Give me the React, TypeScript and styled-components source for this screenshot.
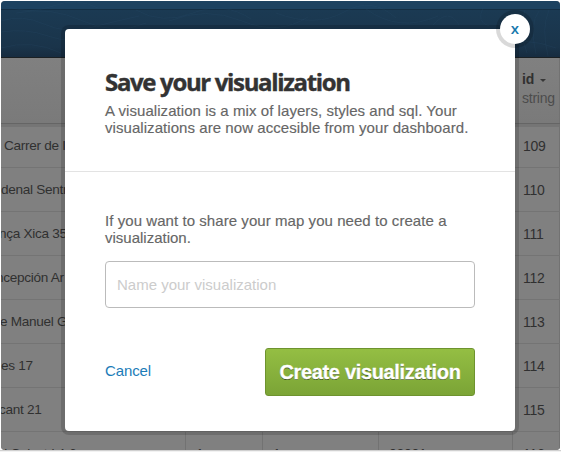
import React from "react";
import styled, { createGlobalStyle } from "styled-components";

const GlobalStyle = createGlobalStyle`
  * { box-sizing: border-box; }
  body { margin: 0; background: #fff; overflow: hidden; }
`;

const sans = `"Liberation Sans", Arial, Helvetica, sans-serif`;

const Page = styled.main`
  position: relative;
  width: 561px;
  height: 452px;
  padding: 1px 1px 2px;
  overflow: hidden;
  background: linear-gradient(#fff 450px, #d0d0d0 450px, #d0d0d0 451px, #f2f2f2 451px);
  font-family: ${sans};
`;

const Window = styled.div`
  display: flex;
  flex-direction: column;
  width: 559px;
  height: 449px;
  overflow: hidden;
  border-radius: 4px;
  background: #808080;
`;

const Banner = styled.header`
  position: relative;
  flex: none;
  height: 57px;
  border-bottom: 1px solid #1b2023;
  background: linear-gradient(#1d4260 0 8px, #142e43 8px 9px, #1b3a53 9px, #1a344a 46px, #172c40 56px);
`;

const Contours = styled.svg`
  display: block;
  width: 559px;
  height: 56px;
  fill: none;
  stroke: #315a78;
  stroke-opacity: 0.16;
`;

const TableRow = styled.div<{ $head?: boolean }>`
  display: grid;
  flex: none;
  grid-template-columns: 185px 77px 116px 134px 47px;
  height: ${(p) => (p.$head ? 66 : 44)}px;
  border-bottom: 1px solid ${(p) => (p.$head ? "#656565" : "#747474")};
  background: ${(p) => (p.$head ? "linear-gradient(#808080, #7a7a7a)" : "#808080")};
  &:nth-child(3) { box-shadow: inset 0 3px #757575; }
`;

const Cell = styled.div<{ $left?: number }>`
  display: flex;
  align-items: center;
  padding-left: ${(p) => p.$left ?? 10}px;
  border-right: 1px solid #727272;
  color: #303030;
  font-size: 14px;
  letter-spacing: -0.3px;
  white-space: pre;
`;

const HeadCell = styled(Cell)`
  flex-direction: column;
  align-items: flex-start;
  padding-top: 12px;
  color: #4c4c4c;
  line-height: 19px;
  letter-spacing: -0.25px;
`;

const FieldName = styled.strong`
  display: flex;
  align-items: center;
  gap: 6px;
  color: #303030;
`;

const Caret = styled.i`
  margin-top: 2px;
  border: 3px solid transparent;
  border-top-color: #373737;
  border-bottom: 0;
`;

const Address = styled.span<{ $x: number }>`
  flex: none;
  margin-left: ${(p) => p.$x}px;
  font-size: 13.6px;
`;

const Dialog = styled.section`
  position: absolute;
  left: 65px;
  top: 29px;
  width: 450px;
  height: 402px;
  border-radius: 4px;
  background: #fff;
  box-shadow: 0 0 0 4px rgba(0, 0, 0, 0.15);
`;

const DialogHeader = styled.header`
  height: 143px;
  padding: 36px 40px 0;
  border-bottom: 1px solid #e3e3e3;
`;

const Title = styled.h1`
  margin: 0 0 4px;
  color: #333;
  font: 700 24px/33px "Open Sans", sans-serif;
  letter-spacing: -1.34px;
  white-space: nowrap;
  -webkit-text-stroke: 0.4px #333;
`;

const Copy = styled.p`
  margin: 3px 0 0;
  color: #666;
  font-size: 15px;
  line-height: 17px;
`;

const Line = styled.span<{ $track: number }>`
  display: block;
  letter-spacing: ${(p) => p.$track}px;
  white-space: nowrap;
  -webkit-text-stroke: 0.15px #666;
`;

const Form = styled.form`
  display: flex;
  flex-direction: column;
  padding: 37px 40px 0;
`;

const NameInput = styled.input`
  width: 370px;
  height: 47px;
  margin-top: 15px;
  padding: 0 11px;
  border: 1px solid #bbb;
  border-radius: 4px;
  outline: none;
  background: #fff;
  color: #666;
  font: 15px ${sans};
  letter-spacing: 0;
  &::placeholder { color: #ccc; opacity: 1; }
`;

const Actions = styled.div`
  display: flex;
  align-items: center;
  justify-content: space-between;
  margin-top: 40px;
`;

const Cancel = styled.a`
  margin-top: -3px;
  color: #1c7cb8;
  font-size: 15px;
  letter-spacing: -0.1px;
`;

const Submit = styled.button`
  width: 210px;
  height: 48px;
  padding: 0;
  border: 1px solid #6e932f;
  border-radius: 3px;
  background: linear-gradient(#94be43, #7ba436);
  color: #fff;
  font: 700 20px ${sans};
  letter-spacing: -0.33px;
  text-shadow: 0 1px rgba(0, 0, 0, 0.55);
  white-space: nowrap;
  -webkit-text-stroke: 0.3px #fff;
`;

const Close = styled.button`
  position: absolute;
  left: 435px;
  top: -15px;
  display: grid;
  place-items: center;
  width: 30px;
  height: 30px;
  padding: 0 0 2px;
  border: 0;
  border-radius: 50%;
  background: #fff;
  box-shadow: 0 0 0 4px rgba(0, 0, 0, 0.15);
  color: #1778ad;
  font: 600 15px/1 "Open Sans", sans-serif;
`;

const rows = [
  { address: "Carrer de I", x: 3, id: "109" },
  { address: "denal Sentr", x: 0, id: "110" },
  { address: "nça Xica 35", x: -2, id: "111" },
  { address: "ncepción Ar", x: -5, id: "112" },
  { address: "e Manuel G", x: -1, id: "113" },
  { address: "es 17", x: 0, id: "114" },
  { address: "cant 21", x: -2, id: "115" },
  { address: "ni Colostri 4-6", x: -4, id: "116", a: "1", b: "1", code: "08001" },
];

export default function App() {
  return (
    <>
      <GlobalStyle />
      <Page>
        <Window>
          <Banner>
            <Contours viewBox="0 0 559 56" aria-hidden="true">
              <path d="M0 20q21-7 43 3t45 4 50-12M0 31q25-4 47 4t55 2M0 47q31-9 60 5M15 12q34-7 67 8t63 2M5 5q23 9 47 0t45 2M135 9q26 15 57 3t58 6M168 20q37-15 73 0t66-4M275 12q40 15 68-1t52 6M365 8q33 24 72 7M432 24q16-18 26 0M482 7q-7 14 6 18M515 13q-10 17 0 36M524 9q-7 19 2 43M538 10q-10 13-3 43M548 9q-8 18-1 46M499 45q24-10 56 2" />
            </Contours>
          </Banner>
          <TableRow $head>
            <Cell /><Cell /><Cell /><Cell />
            <HeadCell $left={9}>
              <FieldName>id<Caret /></FieldName>
              <span>string</span>
            </HeadCell>
          </TableRow>
          {rows.map((row) => (
            <TableRow key={row.id}>
              <Cell $left={0}><Address $x={row.x}>{row.address}</Address></Cell>
              <Cell>{row.a}</Cell>
              <Cell>{row.b}</Cell>
              <Cell>{row.code}</Cell>
              <Cell>{row.id}</Cell>
            </TableRow>
          ))}
        </Window>
        <Dialog role="dialog" aria-label="Save your visualization">
          <DialogHeader>
            <Title>Save your visualization</Title>
            <Copy>
              <Line $track={0.06}>A visualization is a mix of layers, styles and sql. Your</Line>
              <Line $track={0.06}>visualizations are now accesible from your dashboard.</Line>
            </Copy>
          </DialogHeader>
          <Form onSubmit={(event) => event.preventDefault()}>
            <Copy>
              <Line $track={0.06}>If you want to share your map you need to create a</Line>
              <Line $track={0}>visualization.</Line>
            </Copy>
            <NameInput placeholder="Name your visualization" />
            <Actions>
              <Cancel>Cancel</Cancel>
              <Submit type="submit">Create visualization</Submit>
            </Actions>
          </Form>
          <Close type="button" aria-label="Close">x</Close>
        </Dialog>
      </Page>
    </>
  );
}
